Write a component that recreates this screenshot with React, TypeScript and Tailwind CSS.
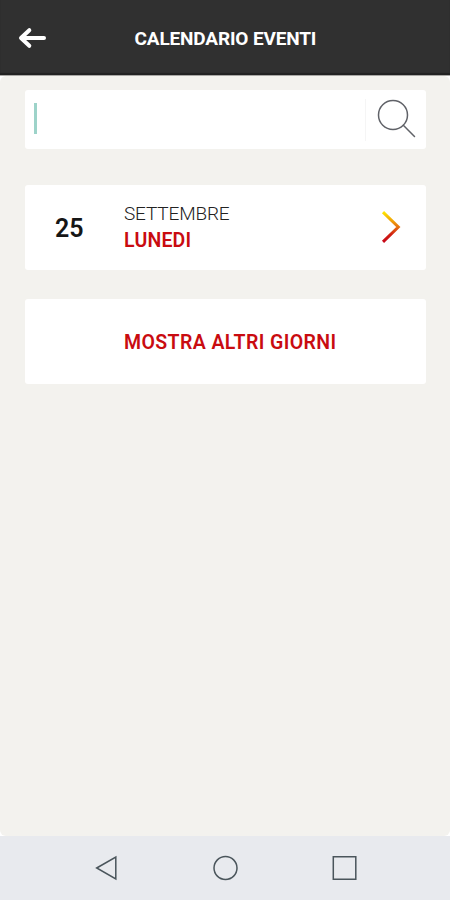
function BackArrow() {
  return (
    <svg width="28" height="22" viewBox="0 0 28 22" fill="none" stroke="#fff" strokeWidth="4" strokeLinecap="round" strokeLinejoin="round">
      <path d="M11.3 3.2 3 11l8.3 7.8" />
      <path d="M4 11h22" />
    </svg>
  );
}

function Header() {
  return (
    <header className="flex h-[76px] shrink-0 items-center border-b border-[#a9a8a5] bg-[#303030] shadow-[inset_0_-2px_1px_#222]">
      <button className="ml-[18px] w-7" aria-label="Indietro">
        <BackArrow />
      </button>
      <h1 className="ml-[88.5px] pt-[2px] text-[19px] leading-6 font-bold tracking-[-0.15px] whitespace-nowrap text-white">CALENDARIO EVENTI</h1>
    </header>
  );
}

function SearchBar() {
  return (
    <div className="flex h-[59px] items-center rounded-[3px] bg-white">
      <span className="mb-[2px] ml-[9px] h-[31px] w-[3px] bg-[#9dd3c9]" />
      <span className="mt-px ml-auto h-[42px] w-px bg-[#f5f5f5]" />
      <svg className="mr-[8px] mb-px ml-[10px]" width="42" height="42" viewBox="0 0 42 42" fill="none" stroke="#606268" strokeWidth="1.5">
        <circle cx="17" cy="17" r="14.5" />
        <path d="M27.3 27.3 38.5 38.5" strokeLinecap="round" />
      </svg>
    </div>
  );
}

function Chevron() {
  return (
    <svg width="20" height="34" viewBox="0 0 20 34" fill="none">
      <defs>
        <linearGradient id="chevron" x1="0" y1="0" x2="0" y2="34" gradientUnits="userSpaceOnUse">
          <stop offset="0.05" stopColor="#ffe900" />
          <stop offset="0.5" stopColor="#e6700f" />
          <stop offset="0.72" stopColor="#d01f12" />
          <stop offset="1" stopColor="#c4001a" />
        </linearGradient>
      </defs>
      <path d="M2 2.2 17.3 17 2 31.8" stroke="url(#chevron)" strokeWidth="3" />
    </svg>
  );
}

function DayCard({ day, month, weekday }: { day: string; month: string; weekday: string }) {
  return (
    <button className="mt-9 flex h-[85px] items-center rounded-[3px] bg-white text-left">
      <span className="w-[99px] pt-[2px] pl-[30px] text-[25px] font-semibold text-[#161616]">{day}</span>
      <span className="mb-px flex flex-col text-[19px] whitespace-nowrap">
        <span className="leading-[26px] font-light tracking-[-0.15px] text-[#222]">{month}</span>
        <span className="pt-px text-[19.5px] leading-[26px] font-semibold tracking-[0.2px] text-[#c90b10]">{weekday}</span>
      </span>
      <span className="mr-[25px] mb-px ml-auto">
        <Chevron />
      </span>
    </button>
  );
}

function NavBar() {
  return (
    <nav className="flex h-16 shrink-0 items-center justify-center gap-[93px] bg-[#e8eaee]">
      <svg width="26" height="26" viewBox="0 0 26 26" fill="none" stroke="#4a555b" strokeWidth="1.5">
        <path d="M3.7 13 22.8 2v22Z" />
      </svg>
      <svg width="26" height="26" viewBox="0 0 26 26" fill="none" stroke="#4a555b" strokeWidth="1.5">
        <circle cx="13.5" cy="13" r="11.5" />
      </svg>
      <svg width="26" height="26" viewBox="0 0 26 26" fill="none" stroke="#4a555b" strokeWidth="1.5">
        <path d="M2.3 1.8h22.5v22.5H2.3z" />
      </svg>
    </nav>
  );
}

export default function App() {
  return (
    <div className="flex h-[900px] w-[450px] flex-col overflow-hidden bg-white font-[Roboto,sans-serif]">
      <Header />
      <main className="flex flex-1 flex-col rounded-[6px] bg-[#f3f2ee] pt-[14px] pr-6 pl-[25px]">
        <SearchBar />
        <DayCard day="25" month="SETTEMBRE" weekday="LUNEDI" />
        <button className="mt-[29px] flex h-[85px] items-center rounded-[3px] bg-white pt-[2px] pl-[99px] text-[19.5px] font-semibold tracking-[0.4px] whitespace-nowrap text-[#c90b10]">
          MOSTRA ALTRI GIORNI
        </button>
      </main>
      <NavBar />
    </div>
  );
}
